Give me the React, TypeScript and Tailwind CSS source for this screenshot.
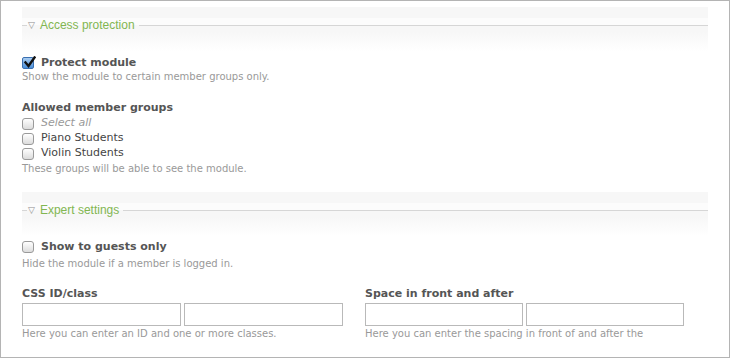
import React from "react";

const font = { fontFamily: '"DejaVu Sans", Verdana, sans-serif' };
const legendFont = { fontFamily: '"Liberation Sans", Arial, sans-serif' };

function Box({ checked = false }: { checked?: boolean }) {
  if (checked) {
    return (
      <span className="relative inline-block w-[12px] h-[12px] rounded-[2px] border border-[#3a6fb0] bg-gradient-to-b from-[#a9cdf2] to-[#4b8fd8] shrink-0">
        <svg viewBox="0 0 13 13" className="absolute left-[0px] top-[-2px] w-[13px] h-[13px]">
          <path d="M2.5 6.5 L5.5 10 L11.5 1.5" fill="none" stroke="#111" strokeWidth="2.4" strokeLinecap="square" />
        </svg>
      </span>
    );
  }
  return (
    <span className="inline-block w-[12px] h-[12px] rounded-[3px] border border-[#9a9a9a] bg-gradient-to-b from-white to-[#dcdcdc] shrink-0" />
  );
}

function Legend({ title }: { title: string }) {
  return (
    <div className="w-[686px]">
      <div className="h-[11px] bg-[#f7f7f7]" />
      <div className="flex items-center h-[14px] bg-[linear-gradient(to_bottom,#fcfcfc_50%,#f7f7f7_50%)]">
        <div className="w-[5px] h-px bg-[#d6d6d6]" />
        <span className="text-[9px] text-[#8c8c8c] ml-[1px] mr-[5px] leading-none">▽</span>
        <span style={legendFont} className="text-[12px] text-[#82b651] leading-none">{title}</span>
        <div className="flex-1 h-px bg-[#d6d6d6] ml-[4px]" />
      </div>
      <div className="h-[19px] bg-gradient-to-b from-[#f7f7f7] to-white" />
    </div>
  );
}

export default function App() {
  return (
    <div style={font} className="w-[730px] h-[358px] border border-[#b4b4b4] bg-white overflow-hidden">
      <div className="ml-[21px] mt-[6px]">
        <Legend title="Access protection" />
        <div className="mt-[5px] h-[14px] flex items-center gap-[7px]">
          <Box checked />
          <span className="text-[11px] font-bold text-[#555]">Protect module</span>
        </div>
        <div className="h-[14px] leading-[14px] text-[10px] text-[#999]">Show the module to certain member groups only.</div>
        <div className="mt-[17px] h-[14px] leading-[14px] text-[11px] font-bold text-[#555]">Allowed member groups</div>
        <div className="mt-[1px] flex flex-col">
          <div className="h-[15px] flex items-center gap-[7px]">
            <Box />
            <span className="text-[11px] italic text-[#999]">Select all</span>
          </div>
          <div className="h-[15px] flex items-center gap-[7px]">
            <Box />
            <span className="text-[11px] text-[#444]">Piano Students</span>
          </div>
          <div className="h-[15px] flex items-center gap-[7px]">
            <Box />
            <span className="text-[11px] text-[#444]">Violin Students</span>
          </div>
        </div>
        <div className="mt-[1px] h-[14px] leading-[14px] text-[10px] text-[#999]">These groups will be able to see the module.</div>

        <div className="mt-[16px]">
          <Legend title="Expert settings" />
        </div>
        <div className="mt-[4px] h-[14px] flex items-center gap-[7px]">
          <Box />
          <span className="text-[11px] font-bold text-[#555]">Show to guests only</span>
        </div>
        <div className="mt-[3px] h-[14px] leading-[14px] text-[10px] text-[#999]">Hide the module if a member is logged in.</div>

        <div className="mt-[16px] flex">
          <div className="w-[343px]">
            <div className="h-[14px] leading-[14px] text-[11px] font-bold text-[#555]">CSS ID/class</div>
            <div className="mt-[2px] flex gap-[3px]">
              <div className="w-[159px] h-[23px] border border-[#b9b9b9] bg-white" />
              <div className="w-[159px] h-[23px] border border-[#b9b9b9] bg-white" />
            </div>
            <div className="mt-[1px] h-[14px] leading-[14px] text-[10px] text-[#999]">Here you can enter an ID and one or more classes.</div>
          </div>
          <div className="w-[343px]">
            <div className="h-[14px] leading-[14px] text-[11px] font-bold text-[#555]">Space in front and after</div>
            <div className="mt-[2px] flex gap-[3px]">
              <div className="w-[158px] h-[23px] border border-[#b9b9b9] bg-white" />
              <div className="w-[158px] h-[23px] border border-[#b9b9b9] bg-white" />
            </div>
            <div className="mt-[1px] h-[14px] leading-[14px] text-[10px] text-[#999]">Here you can enter the spacing in front of and after the</div>
          </div>
        </div>
      </div>
    </div>
  );
}
